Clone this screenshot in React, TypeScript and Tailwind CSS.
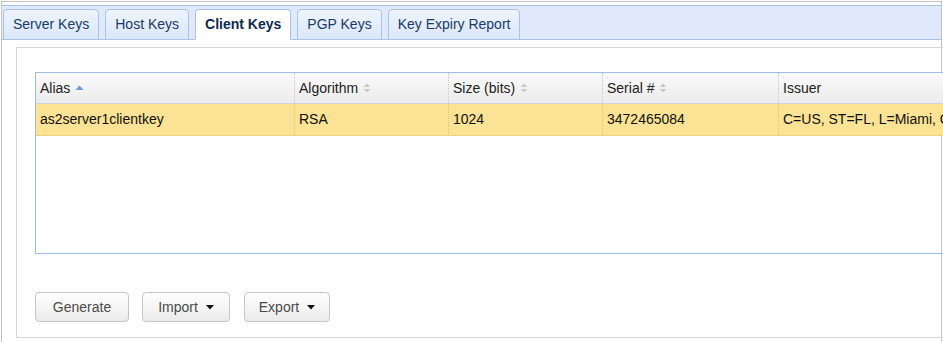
import React from "react";

const tabs = ["Server Keys", "Host Keys", "Client Keys", "PGP Keys", "Key Expiry Report"];

function SortBoth() {
  return (
    <svg width="8" height="10" viewBox="0 0 8 10" className="ml-[5px] shrink-0">
      <path d="M4 0.5 L7.5 4 L0.5 4 Z" fill="#c9c9c9" />
      <path d="M0.5 6 L7.5 6 L4 9.5 Z" fill="#c9c9c9" />
    </svg>
  );
}

function SortUp() {
  return (
    <svg width="9" height="6" viewBox="0 0 9 6" className="ml-[5px] shrink-0">
      <path d="M4.5 0.5 L8.5 5 L0.5 5 Z" fill="#6b9bd8" />
    </svg>
  );
}

function Caret() {
  return (
    <svg width="8" height="5" viewBox="0 0 8 5" className="ml-[8px]">
      <path d="M0 0 L8 0 L4 4.5 Z" fill="#111" />
    </svg>
  );
}

const cols = [
  { label: "Alias", w: "w-[259px]", sort: "up", value: "as2server1clientkey" },
  { label: "Algorithm", w: "w-[154px]", sort: "both", value: "RSA" },
  { label: "Size (bits)", w: "w-[154px]", sort: "both", value: "1024" },
  { label: "Serial #", w: "w-[176px]", sort: "both", value: "3472465084" },
  { label: "Issuer", w: "w-[400px]", sort: "none", value: "C=US, ST=FL, L=Miami, O=Example" },
];

export default function App() {
  return (
    <div
      className="relative h-[342px] w-[943px] overflow-hidden bg-white text-[14px]"
      style={{ fontFamily: '"Liberation Sans", Arial, sans-serif' }}
    >
      <div className="ml-[1px] mt-[1px] flex h-[360px] w-[941px] flex-col border-x border-t border-[#c4c4c4] pt-[3px]">
        {/* tab strip */}
        <div className="flex h-[35px] items-end border-y border-[#a9c2e6] bg-[#dfe9fb] pl-[1px]">
          {tabs.map((t) => {
            const active = t === "Client Keys";
            return (
              <div
                key={t}
                className={
                  "mr-[6px] -mb-px flex h-[31px] items-center rounded-t-[4px] border px-[9px] " +
                  (active
                    ? "border-[#a9c2e6] border-b-white bg-white font-bold text-[#0f2a52]"
                    : "border-[#a9c2e6] bg-gradient-to-b from-[#eef4fe] to-[#dbe7fa] text-[#1c3a66]")
                }
              >
                {t}
              </div>
            );
          })}
        </div>

        {/* body */}
        <div className="flex-1 pl-[14px] pt-[7px]">
          <div className="h-[291px] w-[960px] border-b border-l border-t border-[#d6d6d6] pl-[18px] pt-[24px]">
            <div className="h-[182px] w-[1000px] border border-[#9ebde3]">
              <div className="flex h-[31px] border-b border-[#c9d3df] bg-gradient-to-b from-[#fafafa] to-[#ebebeb] text-[#222]">
                {cols.map((c, i) => (
                  <div
                    key={c.label}
                    className={
                      "flex shrink-0 items-center pl-[4px] " +
                      c.w +
                      (i < cols.length - 1 ? " border-r border-dotted border-[#c6c6c6]" : "")
                    }
                  >
                    {c.label}
                    {c.sort === "up" && <SortUp />}
                    {c.sort === "both" && <SortBoth />}
                  </div>
                ))}
              </div>
              <div className="flex h-[32px] border-b border-dotted border-[#d8c57e] bg-[#fbe294] text-[#111]">
                {cols.map((c, i) => (
                  <div
                    key={c.label}
                    className={
                      "flex shrink-0 items-center whitespace-nowrap pl-[4px] " +
                      c.w +
                      (i < cols.length - 1 ? " border-r border-dotted border-[#d8c57e]" : "")
                    }
                  >
                    {c.value}
                  </div>
                ))}
              </div>
            </div>

            <div className="mt-[38px] flex gap-[13px] text-[#4a4a4a]">
              <button className="flex h-[30px] w-[94px] items-center justify-center rounded-[4px] border border-[#c6c6c6] bg-gradient-to-b from-white to-[#ebebeb]">
                Generate
              </button>
              <button className="flex h-[30px] w-[88px] items-center justify-center rounded-[4px] border border-[#c6c6c6] bg-gradient-to-b from-white to-[#ebebeb]">
                Import
                <Caret />
              </button>
              <button className="ml-[1px] flex h-[30px] w-[86px] items-center justify-center rounded-[4px] border border-[#c6c6c6] bg-gradient-to-b from-white to-[#ebebeb]">
                Export
                <Caret />
              </button>
            </div>
          </div>
        </div>
      </div>
    </div>
  );
}
